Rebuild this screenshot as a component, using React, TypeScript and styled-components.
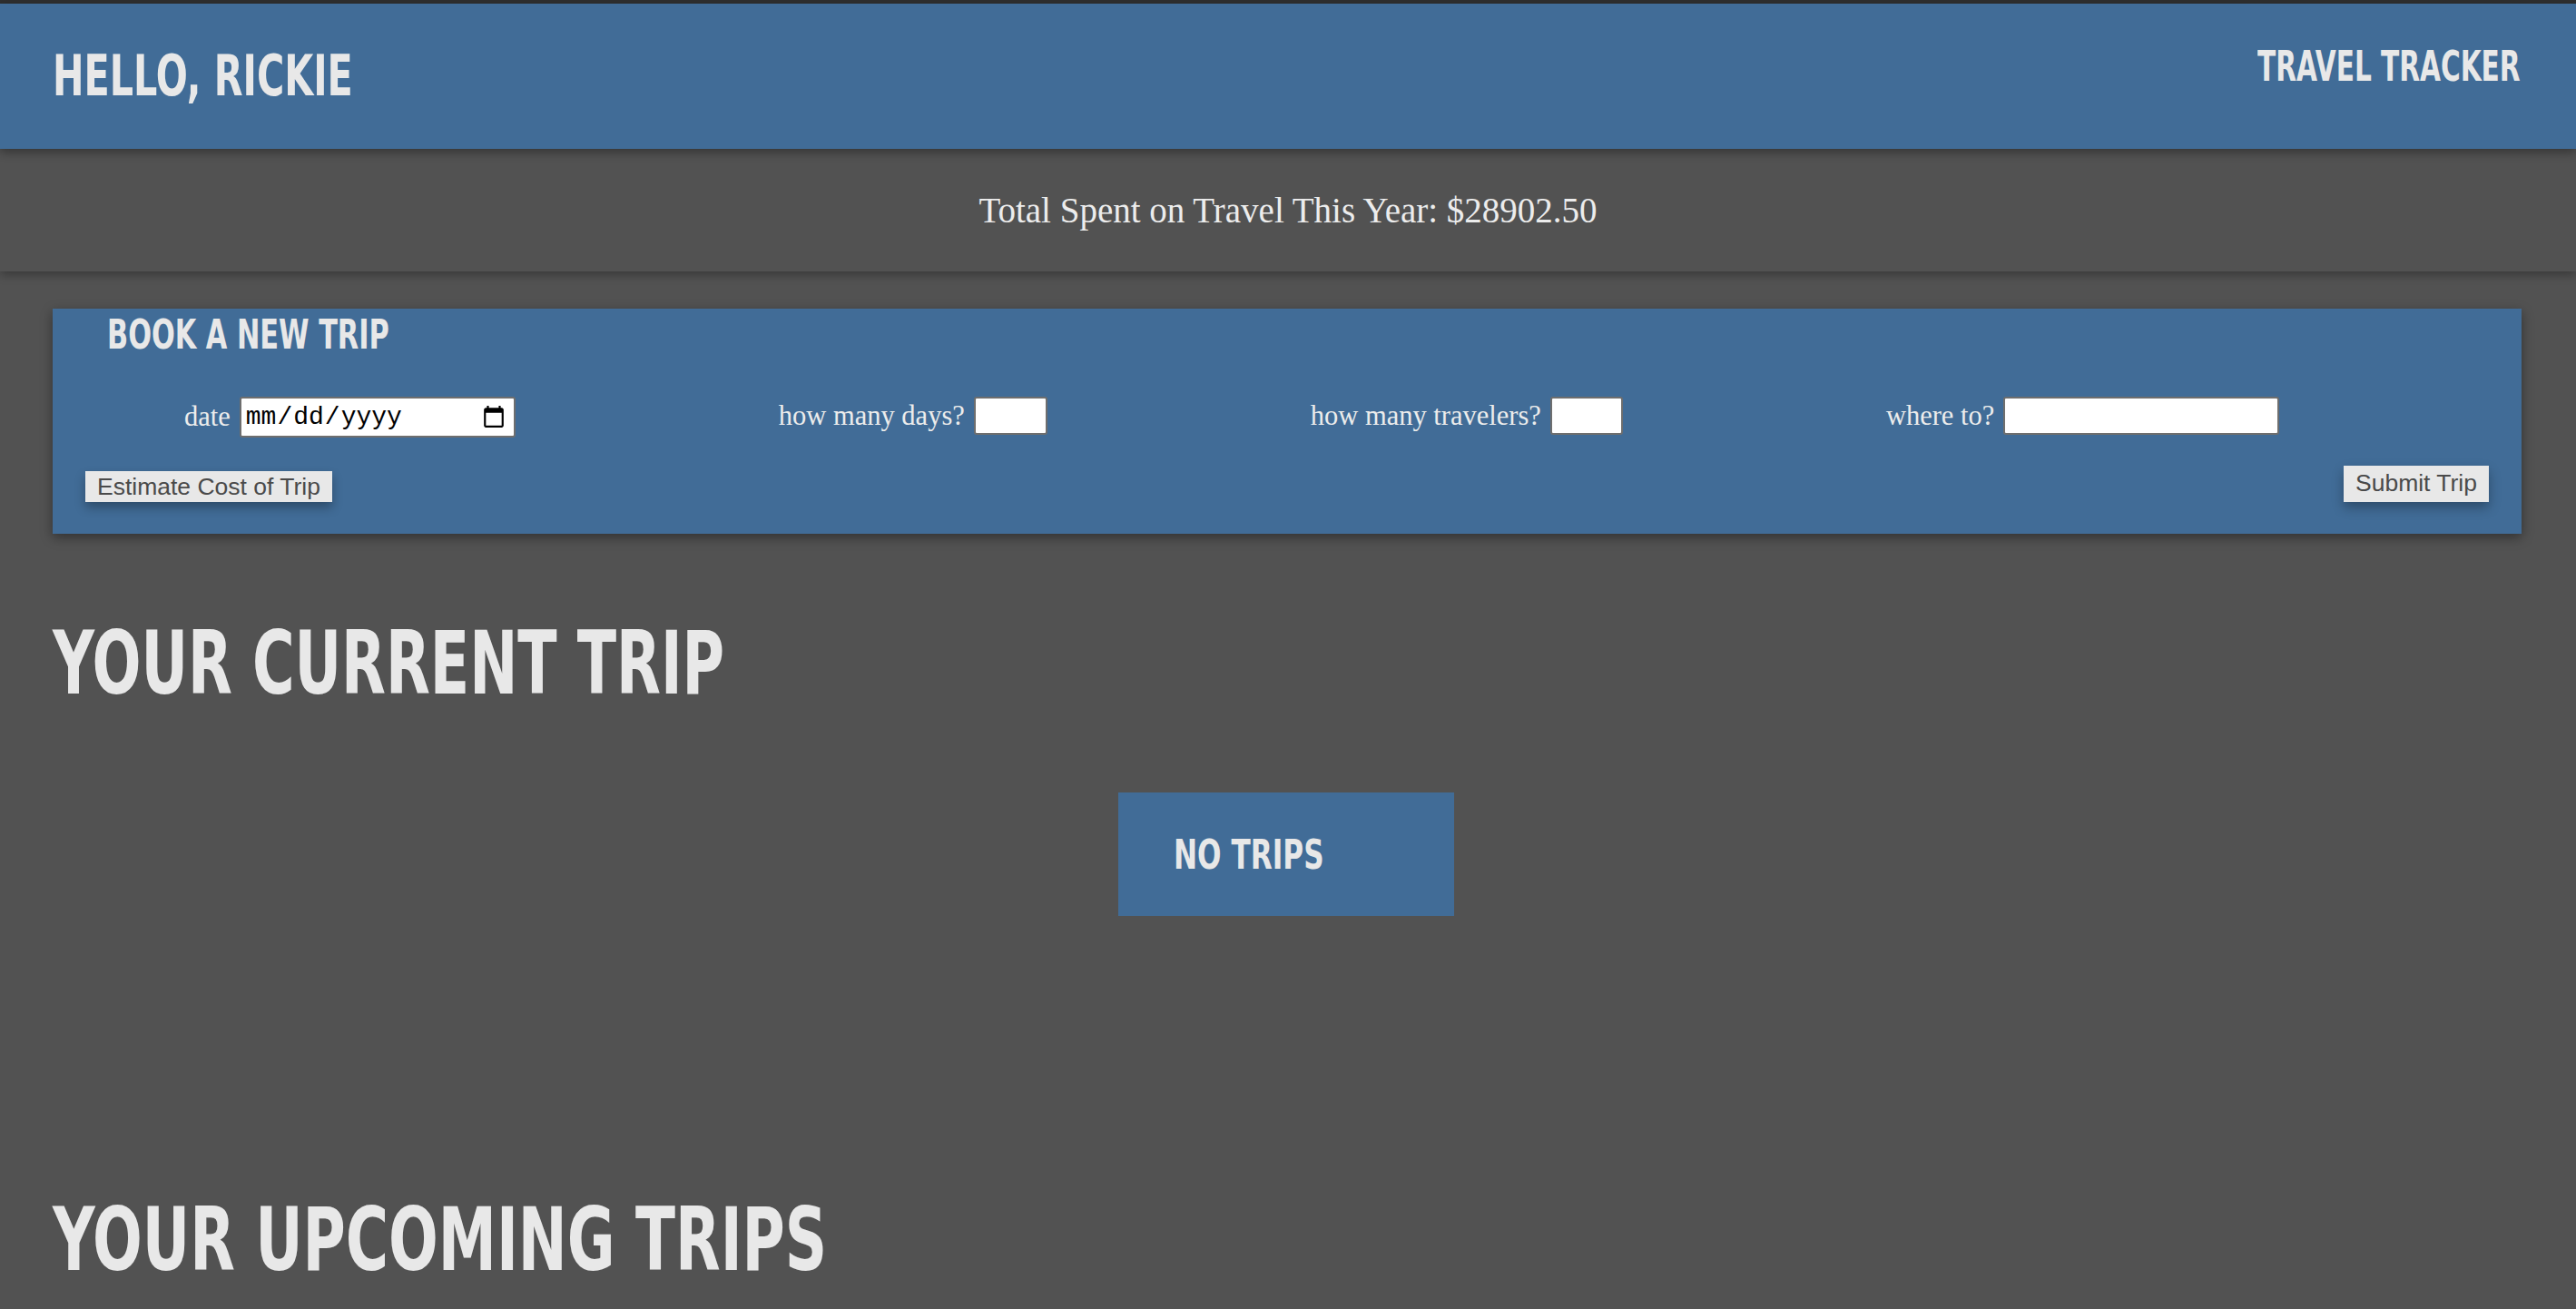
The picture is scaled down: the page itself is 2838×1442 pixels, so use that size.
import React from "react";
import styled, { createGlobalStyle } from "styled-components";

const GlobalStyle = createGlobalStyle`
  html, body {
    margin: 0;
    padding: 0;
    background: #525252;
  }
  body {
    font-family: "Liberation Serif", "DejaVu Serif", serif;
    color: #e8e8e8;
  }
  * { box-sizing: border-box; }
`;

const displayFont = `"DejaVu Sans Condensed", "Liberation Sans Narrow", "Liberation Sans", sans-serif`;

const Page = styled.div`
  display: flex;
  flex-direction: column;
  border-top: 4px solid #2f2f2f;
`;

const Header = styled.header`
  position: relative;
  z-index: 2;
  height: 160px;
  display: flex;
  justify-content: space-between;
  align-items: flex-start;
  padding: 0 61px 0 58px;
  background: #416c97;
  box-shadow: 0 4px 10px rgba(0, 0, 0, 0.35);
`;

const Squeeze = styled.span<{ $x: number; $origin?: string }>`
  display: inline-block;
  white-space: nowrap;
  transform: scaleX(${(p) => p.$x});
  transform-origin: ${(p) => p.$origin ?? "left"} center;
`;

const Greeting = styled.h1`
  margin: 49px 0 0 0;
  font-family: ${displayFont};
  font-weight: 700;
  font-size: 62px;
  line-height: 1;
  text-transform: uppercase;
  color: #e8e8e8;
`;

const Brand = styled.h2`
  margin: 45px 0 0 0;
  font-family: ${displayFont};
  font-weight: 700;
  font-size: 47px;
  line-height: 1;
  text-transform: uppercase;
  color: #e8e8e8;
`;

const SummaryBar = styled.section`
  position: relative;
  z-index: 1;
  height: 135px;
  display: flex;
  align-items: center;
  justify-content: center;
  background: #525252;
  box-shadow: 0 4px 10px rgba(0, 0, 0, 0.3);
`;

const SummaryText = styled.p`
  margin: 0;
  font-family: "Liberation Serif", serif;
  font-size: 39px;
  color: #ececec;
`;

const Main = styled.main`
  display: flex;
  flex-direction: column;
  padding: 0 60px 0 58px;
`;

const BookingForm = styled.form`
  margin-top: 41px;
  display: flex;
  flex-direction: column;
  padding: 6px 36px 35px 36px;
  background: #416c97;
  box-shadow: 0 4px 12px rgba(0, 0, 0, 0.4);
`;

const FormTitle = styled.h3`
  margin: 0 0 46px 24px;
  font-family: ${displayFont};
  font-weight: 700;
  font-size: 45px;
  line-height: 1;
  text-transform: uppercase;
  color: #e8e8e8;
`;

const FieldRow = styled.div`
  display: flex;
  align-items: flex-start;
  gap: 290px;
  padding-left: 109px;
`;

const Field = styled.label`
  display: flex;
  align-items: center;
  gap: 10px;
`;

const FieldLabel = styled.span`
  font-family: "Liberation Serif", serif;
  font-size: 30.5px;
  color: #ececec;
  white-space: nowrap;
`;

const TextInput = styled.input<{ $w: number }>`
  width: ${(p) => p.$w}px;
  height: 42px;
  padding: 0 6px;
  border: 2px solid #6e6e6e;
  border-radius: 3px;
  background: #ffffff;
  font-family: "Liberation Mono", monospace;
  font-size: 24px;
  color: #000;
`;

const DateInput = styled.input`
  width: 304px;
  height: 45px;
  padding: 0 6px 0 4px;
  border: 2px solid #6e6e6e;
  border-radius: 3px;
  background: #ffffff;
  font-family: "Liberation Mono", monospace;
  font-size: 28px;
  color: #000;
`;

const ActionRow = styled.div`
  margin-top: 31px;
  display: flex;
  justify-content: space-between;
  align-items: flex-end;
`;

const ActionButton = styled.button<{ $h: number; $pt: number }>`
  height: ${(p) => p.$h}px;
  padding: ${(p) => p.$pt}px 13px 0 13px;
  display: flex;
  align-items: flex-start;
  border: none;
  background: #e8e8e8;
  color: #4a4a4a;
  font-family: "Liberation Sans", Arial, sans-serif;
  font-size: 26.5px;
  line-height: 30px;
  box-shadow: 0 6px 12px rgba(0, 0, 0, 0.3);
  cursor: pointer;
`;

const SectionTitle = styled.h2<{ $top: number }>`
  margin: ${(p) => p.$top}px 0 0 0;
  font-family: ${displayFont};
  font-weight: 700;
  font-size: 96px;
  line-height: 1;
  text-transform: uppercase;
  color: #e8e8e8;
`;

const EmptyCard = styled.div`
  align-self: center;
  margin: 94px 0 0 -2px;
  width: 370px;
  height: 136px;
  padding: 46px 0 0 61px;
  background: #416c97;
`;

const EmptyText = styled.p`
  margin: 0;
  font-family: ${displayFont};
  font-weight: 700;
  font-size: 45px;
  line-height: 1;
  text-transform: uppercase;
  color: #e8e8e8;
`;

export default function App() {
  return (
    <Page>
      <GlobalStyle />
      <Header>
        <Greeting>
          <Squeeze $x={0.74}>Hello, Rickie</Squeeze>
        </Greeting>
        <Brand>
          <Squeeze $x={0.7} $origin="right">Travel Tracker</Squeeze>
        </Brand>
      </Header>
      <SummaryBar>
        <SummaryText>Total Spent on Travel This Year: $28902.50</SummaryText>
      </SummaryBar>
      <Main>
        <BookingForm onSubmit={(e) => e.preventDefault()}>
          <FormTitle>
            <Squeeze $x={0.75}>Book a new trip</Squeeze>
          </FormTitle>
          <FieldRow>
            <Field>
              <FieldLabel>date</FieldLabel>
              <DateInput type="date" />
            </Field>
            <Field>
              <FieldLabel>how many days?</FieldLabel>
              <TextInput $w={81} type="number" />
            </Field>
            <Field>
              <FieldLabel>how many travelers?</FieldLabel>
              <TextInput $w={80} type="number" />
            </Field>
            <Field>
              <FieldLabel>where to?</FieldLabel>
              <TextInput $w={304} type="text" />
            </Field>
          </FieldRow>
          <ActionRow>
            <ActionButton type="button" $h={34} $pt={2}>
              Estimate Cost of Trip
            </ActionButton>
            <ActionButton type="submit" $h={40} $pt={4}>
              Submit Trip
            </ActionButton>
          </ActionRow>
        </BookingForm>
        <SectionTitle $top={95}>
          <Squeeze $x={0.735}>Your current trip</Squeeze>
        </SectionTitle>
        <EmptyCard>
          <EmptyText>
            <Squeeze $x={0.77}>No trips</Squeeze>
          </EmptyText>
        </EmptyCard>
        <SectionTitle $top={309}>
          <Squeeze $x={0.746}>Your upcoming trips</Squeeze>
        </SectionTitle>
      </Main>
    </Page>
  );
}
